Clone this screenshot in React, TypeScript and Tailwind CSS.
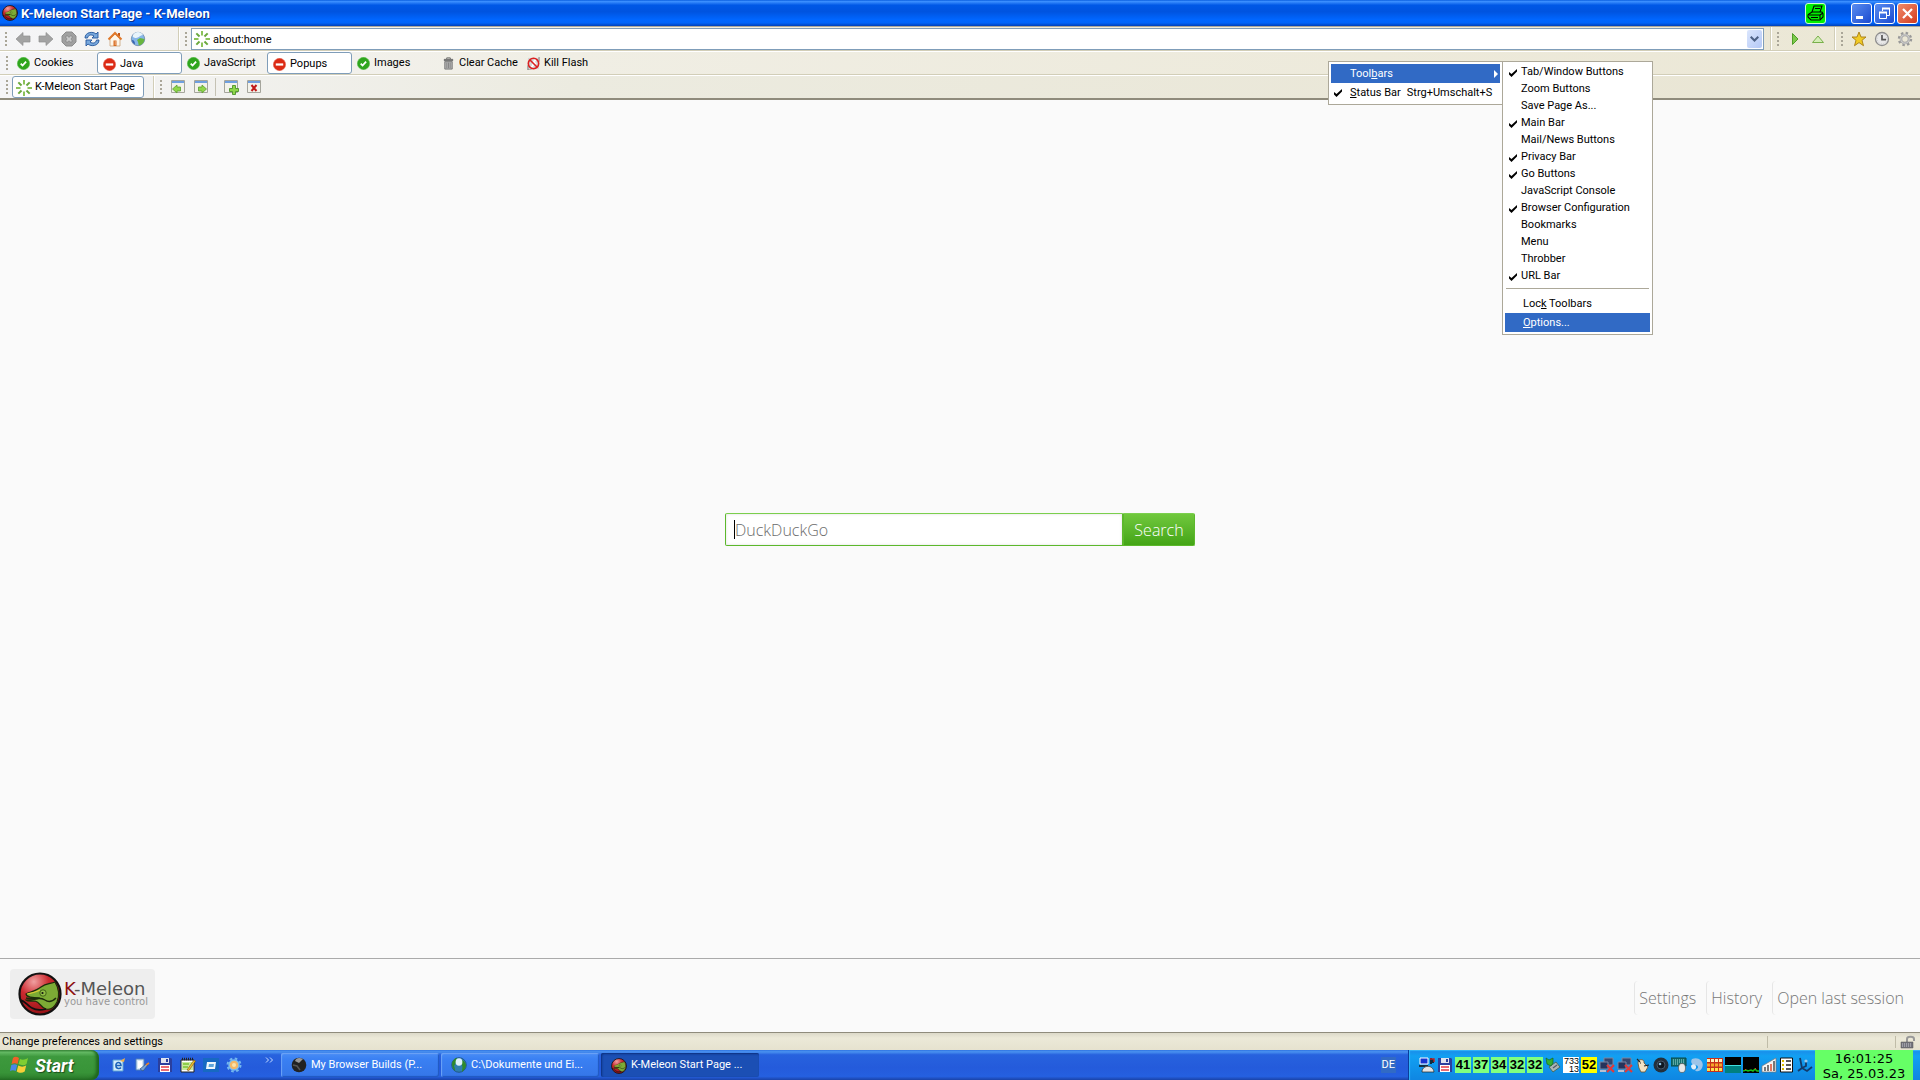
import type { ReactNode } from "react";
import clsx from "clsx";

type IconProps = { className?: string };

const Chameleon = ({ className }: IconProps) => (
  <svg viewBox="0 0 44 44" className={className} aria-hidden="true">
    <defs>
      <radialGradient id="km-red" cx="0.35" cy="0.2" r="0.9">
        <stop offset="0" stopColor="#f0a0a0" />
        <stop offset="0.4" stopColor="#cc2a30" />
        <stop offset="1" stopColor="#8c0c10" />
      </radialGradient>
    </defs>
    <circle cx="22" cy="22" r="20.5" fill="url(#km-red)" stroke="#111" strokeWidth="2.2" />
    <path
      d="M8 22C12 20 18 19 23 15C28 11 33 12 37 10C40 15 42 23 39 30C36 36 32 38 28 37C23 36 22 30 17 29C13 29 10 30 8 28C13 28 18 28 22 26C16 26 9 26 8 22Z"
      fill="#7cab35"
      stroke="#1d2c0b"
      strokeWidth="1.2"
    />
    <path d="M8 26C15 28 22 24 27 28C31 31 35 29 38 26" fill="none" stroke="#1d2c0b" strokeWidth="1.4" />
    <path d="M9 22C14 21 18 20 22 18" fill="none" stroke="#d6c934" strokeWidth="1.2" />
    <circle cx="25" cy="21" r="3.2" fill="#91bd45" stroke="#31500f" strokeWidth="0.8" />
    <circle cx="24.5" cy="21" r="1.1" fill="#111" />
    <path d="M2 28C8 29 9 34 14 36C19 39 24 38 28 37" fill="none" stroke="#111" strokeWidth="1.8" />
  </svg>
);

const Throbber = () => (
  <svg viewBox="0 0 16 16" className="size-4 shrink-0" aria-hidden="true">
    {[0, 45, 90, 135, 180, 225, 270, 315].map((a) => (
      <path
        key={a}
        d="M8 0V4.5"
        stroke={a % 90 ? "#6aa83c" : "#8cc25a"}
        strokeWidth="2"
        transform={`rotate(${a} 8 8)`}
      />
    ))}
  </svg>
);

const Arrow = ({ flip }: { flip?: boolean }) => (
  <svg viewBox="0 0 16 16" className={clsx("size-4", flip && "-scale-x-100")} aria-hidden="true">
    <path d="M1 8L8 1.5V5H15V11H8V14.5Z" fill="#a3a3a3" stroke="#919191" strokeWidth="0.7" />
  </svg>
);

const Stop = () => (
  <svg viewBox="0 0 16 16" className="size-4" aria-hidden="true">
    <path d="M5 1H11L15 5V11L11 15H5L1 11V5Z" fill="#a0a0a0" stroke="#8c8c8c" />
    <path d="M5 5H7L8 6.5L9 5H11V7L9.8 8L11 9V11H9L8 9.7L7 11H5V9L6.2 8L5 7Z" fill="#c9c9c9" stroke="#777" strokeWidth="0.5" />
  </svg>
);

const Reload = () => (
  <svg viewBox="0 0 16 16" className="size-4" aria-hidden="true">
    <path d="M1 7C1 1 9 0 12 3L14 1V7H8L10 5C7 3 4 4 3.5 7Z" fill="#77a7dc" stroke="#24569b" strokeWidth="0.9" />
    <path d="M15 9C15 15 7 16 4 13L2 15V9H8L6 11C9 13 12 12 12.5 9Z" fill="#77a7dc" stroke="#24569b" strokeWidth="0.9" />
  </svg>
);

const Home = () => (
  <svg viewBox="0 0 16 16" className="size-4" aria-hidden="true">
    <path d="M3 8V15H13V8L8 3Z" fill="#fdf6ea" stroke="#c9a27a" strokeWidth="0.8" />
    <path d="M11 2H13V5H11Z" fill="#c0561a" />
    <path d="M1.5 8.5L8 2L14.5 8.5" fill="none" stroke="#e0782a" strokeWidth="2" />
    <path d="M6.5 9.5H9.5V15H6.5Z" fill="#d86a20" />
    <path d="M7.6 11H9M7.6 13H9" stroke="#fde3c8" strokeWidth="0.8" />
  </svg>
);

const Globe = () => (
  <svg viewBox="0 0 16 16" className="size-4" aria-hidden="true">
    <circle cx="8" cy="8" r="6.7" fill="#86b6e8" stroke="#6d87a5" strokeWidth="0.8" />
    <path d="M3 4C5 0 11 0 13 4C10 4 9 7 6 7C4 7 2 6 3 4Z" fill="#e8f4fb" />
    <path d="M7 9L10 7L14.5 8C14 12 12 14 9 14.5C8 13 9 12 7 9Z" fill="#68b540" />
    <path d="M2 9C4 9 5 11 5 13.5C3 12 2 11 2 9Z" fill="#3562b0" />
  </svg>
);

const World = () => (
  <svg viewBox="0 0 16 16" className="size-4" aria-hidden="true">
    <circle cx="8" cy="8" r="7.3" fill="#2f7fae" stroke="#1d5276" strokeWidth="0.8" />
    <path d="M1 6C2 3 4 1 6 1C5 4 5 7 3 9C4 11 4 13 4 14C2 12 1 9 1 6Z" fill="#2f8a2c" />
    <path d="M11 3C14 4 15 7 15 9C14 12 12 14 11 15C11 12 12 10 11 8Z" fill="#2f8a2c" />
    <ellipse cx="8" cy="5" rx="3.4" ry="3.8" fill="#dcf1fa" />
  </svg>
);

const Allowed = () => (
  <svg viewBox="0 0 14 14" className="size-[13px] shrink-0" aria-hidden="true">
    <circle cx="7" cy="7" r="6.6" fill="#2fa51d" stroke="#54bd45" strokeWidth="0.6" />
    <path d="M4 7.2L6 9.2L9.8 5" fill="none" stroke="#fff" strokeWidth="1.9" />
  </svg>
);

const Blocked = () => (
  <svg viewBox="0 0 14 14" className="size-[13px] shrink-0" aria-hidden="true">
    <circle cx="7" cy="7" r="6.6" fill="#dc2a14" stroke="#e35a48" strokeWidth="0.6" />
    <path d="M3 7H11" stroke="#fff" strokeWidth="2.4" />
  </svg>
);

const Trash = () => (
  <svg viewBox="0 0 14 14" className="size-[13px] shrink-0" aria-hidden="true">
    <path d="M5 2V1H9V2" fill="none" stroke="#555" />
    <path d="M2 2H12V4.5H2Z" fill="#777" />
    <path d="M3 5H11V13H3Z" fill="#b5b5b5" stroke="#777" />
    <path d="M5.2 6V12M7 6V12M8.8 6V12" stroke="#777" strokeWidth="0.8" />
  </svg>
);

const KillFlash = () => (
  <svg viewBox="0 0 14 14" className="size-[13px] shrink-0" aria-hidden="true">
    <path d="M1 1H13V13H1Z" fill="#d5d5d5" />
    <path d="M10 3C6 3 8 11 4 11M6 7H10" fill="none" stroke="#fff" strokeWidth="2" />
    <path d="M13 0V5M1 9V14H5" fill="none" stroke="#777" />
    <circle cx="7" cy="7" r="5.6" fill="none" stroke="#dc2020" strokeWidth="1.7" />
    <path d="M3 3L11 11" stroke="#dc2020" strokeWidth="1.7" />
  </svg>
);

const TabIcon = ({ kind }: { kind: "left" | "right" | "new" | "close" }) => (
  <svg viewBox="0 0 16 16" className="size-4" aria-hidden="true">
    <path d="M1.5 1.5H14.5V13.5H1.5Z" fill="#f3f2ea" stroke="#a5a59c" />
    <path d="M2 2H14V4H2Z" fill="#6f9fe0" />
    {kind === "left" && <path d="M2.5 10L7 6V8H10.5V12H7V14Z" fill="#8fd64a" stroke="#5a9f30" strokeWidth="0.8" />}
    {kind === "right" && <path d="M13.5 10L9 6V8H5.5V12H9V14Z" fill="#8fd64a" stroke="#5a9f30" strokeWidth="0.8" />}
    {kind === "new" && (
      <path d="M9.5 6.5H12.5V9.5H15.5V12.5H12.5V15.5H9.5V12.5H6.5V9.5H9.5Z" fill="#8fd64a" stroke="#3f8a1c" strokeWidth="0.8" />
    )}
    {kind === "close" && <path d="M5.5 6L10.5 12M10.5 6L5.5 12" stroke="#c01818" strokeWidth="2" />}
  </svg>
);

const GoIcon = ({ up }: { up?: boolean }) => (
  <svg viewBox="0 0 16 16" className="size-4" aria-hidden="true">
    {up ? (
      <path d="M2.5 11.5L8 5L13.5 11.5Z" fill="#d4edb6" stroke="#79b04b" />
    ) : (
      <path d="M5.5 2.5L11 8L5.5 13.5Z" fill="#7cc94b" stroke="#4f9e28" />
    )}
  </svg>
);

const Star = () => (
  <svg viewBox="0 0 16 16" className="size-4" aria-hidden="true">
    <path d="M8 1L10 6H15L11 9.3L12.5 14.7L8 11.6L3.5 14.7L5 9.3L1 6H6Z" fill="#f1cb25" stroke="#a67c12" strokeWidth="0.9" />
  </svg>
);

const Clock = () => (
  <svg viewBox="0 0 16 16" className="size-4" aria-hidden="true">
    <circle cx="8" cy="8" r="6.5" fill="#e8e8e8" stroke="#8d8d8d" strokeWidth="1.3" />
    <circle cx="8" cy="8" r="4.8" fill="none" stroke="#bbb" strokeWidth="0.7" strokeDasharray="1 1.5" />
    <path d="M8 4V8.7H12" fill="none" stroke="#555" strokeWidth="1.7" />
  </svg>
);

const Gear = () => (
  <svg viewBox="0 0 16 16" className="size-4" aria-hidden="true">
    <circle cx="8" cy="8" r="6" fill="none" stroke="#999" strokeWidth="2.4" strokeDasharray="2.4 2.3" />
    <circle cx="8" cy="8" r="4" fill="none" stroke="#a5a5a5" strokeWidth="2.6" />
    <circle cx="8" cy="8" r="4.2" fill="none" stroke="#d5d5d5" strokeWidth="1" />
  </svg>
);

const Floppy = () => (
  <svg viewBox="0 0 16 16" className="size-4" aria-hidden="true">
    <path d="M1 1H14L15 2V15H1Z" fill="#2a3f9e" />
    <path d="M4 1H12V6H4Z" fill="#dfe4ee" />
    <path d="M9 2H11V5H9Z" fill="#2a3f9e" />
    <path d="M3 8H13V15H3Z" fill="#fff" />
    <path d="M4 10H12M4 13H12" stroke="#e33b44" strokeWidth="1.4" />
  </svg>
);

const Grip = () => (
  <span className="flex w-[11px] shrink-0 flex-col items-center gap-0.5 self-center">
    {[0, 1, 2, 3].map((i) => (
      <i key={i} className="size-0.5 bg-[#aaa698]" />
    ))}
  </span>
);

const ToolButton = ({ label, children }: { label: string; children: ReactNode }) => (
  <button type="button" aria-label={label} className="flex h-full w-[23px] shrink-0 items-center justify-center">
    {children}
  </button>
);

const ToggleButton = ({ label, icon, pressed }: { label: string; icon: ReactNode; pressed?: boolean }) => (
  <button
    type="button"
    aria-pressed={pressed}
    className={clsx(
      "flex h-[22px] w-[85px] shrink-0 items-center gap-1 rounded-[3px] border text-left whitespace-nowrap",
      pressed ? "border-[#7f9db9] bg-white pt-0.5 pl-[5px]" : "border-transparent pl-1",
    )}
  >
    {icon}
    {label}
  </button>
);

const Check = ({ on }: { on?: boolean }) => (
  <svg viewBox="0 0 8 8" className="size-2 shrink-0" aria-hidden="true">
    {on && <path d="M0 3V5.5L2.5 8L8 2.5V0L2.5 5Z" fill="#000" />}
  </svg>
);

const toolbars = [
  { name: "Tab/Window Buttons", on: true },
  { name: "Zoom Buttons", on: false },
  { name: "Save Page As...", on: false },
  { name: "Main Bar", on: true },
  { name: "Mail/News Buttons", on: false },
  { name: "Privacy Bar", on: true },
  { name: "Go Buttons", on: true },
  { name: "JavaScript Console", on: false },
  { name: "Browser Configuration", on: true },
  { name: "Bookmarks", on: false },
  { name: "Menu", on: false },
  { name: "Throbber", on: false },
  { name: "URL Bar", on: true },
];

const menuRow = "flex h-[19px] w-full items-center pt-px whitespace-nowrap";

const ContextMenu = () => (
  <>
    <div
      role="menu"
      className="absolute top-[61px] left-[1328px] z-10 w-[175px] border border-[#aca899] bg-white p-0.5 text-[11px]"
    >
      <button type="button" role="menuitem" className={clsx(menuRow, "bg-[#316ac5] pr-0.5 pl-[19px] text-white")}>
        <span>
          Tool<u>b</u>ars
        </span>
        <svg viewBox="0 0 4 8" className="ml-auto h-2 w-1" aria-hidden="true">
          <path d="M0 0L4 4L0 8Z" fill="#fff" />
        </svg>
      </button>
      <button type="button" role="menuitemcheckbox" aria-checked="true" className={clsx(menuRow, "pl-[3px]")}>
        <Check on />
        <span className="pl-2">
          <u>S</u>tatus Bar
        </span>
        <span className="pl-1.5">Strg+Umschalt+S</span>
      </button>
    </div>
    <div
      role="menu"
      className="absolute top-[61px] left-[1502px] z-20 w-[151px] border border-[#aca899] bg-white p-0.5 text-[11px]"
    >
      {toolbars.map((t) => (
        <button
          key={t.name}
          type="button"
          role="menuitemcheckbox"
          aria-checked={t.on}
          className="flex h-[17px] w-full items-center gap-1 pl-1 whitespace-nowrap"
        >
          <Check on={t.on} />
          {t.name}
        </button>
      ))}
      <hr className="mx-px mt-[3px] mb-[5px] border-[#aca899]" />
      <button type="button" role="menuitem" className={clsx(menuRow, "pl-[18px]")}>
        <span>
          Loc<u>k</u> Toolbars
        </span>
      </button>
      <button type="button" role="menuitem" className={clsx(menuRow, "bg-[#316ac5] pl-[18px] text-white")}>
        <span>
          <u>O</u>ptions...
        </span>
      </button>
    </div>
  </>
);

const captionButton =
  "flex size-[21px] items-center justify-center rounded-[3px] border border-white bg-linear-to-br from-[#5a8cf0] to-[#1c49d0]";

const TitleBar = () => (
  <header className="flex h-[26px] shrink-0 items-center bg-[linear-gradient(to_bottom,#0a5fe0_0%,#3c90ff_6%,#0058e6_20%,#0054e0_45%,#0066ff_75%,#0064fa_88%,#0040b8_100%)] pr-0.5 pl-0.5">
    <Chameleon className="size-4" />
    <h1 className="pt-px pl-[3px] text-[13px] font-bold whitespace-nowrap text-white [text-shadow:1px_1px_0_#0a2f8a]">
      K-Meleon Start Page - K-Meleon
    </h1>
    <button
      type="button"
      aria-label="Print"
      className="mr-[25px] ml-auto flex size-[21px] items-center justify-center rounded-[3px] border border-[#c8ffd0] bg-[#00f000]"
    >
      <svg viewBox="0 0 18 18" className="size-[18px]" fill="none" stroke="#000" strokeWidth="1.1" aria-hidden="true">
        <path d="M5 8L7 2H15L13 8M8 4.5H13" />
        <path d="M2 10L5 8H15L16 10V13L13 16H4L1 13V11Z" />
        <path d="M2 11H13V15M4 13.5H11M13 11L16 9" />
      </svg>
    </button>
    <div className="flex gap-0.5">
      <button type="button" aria-label="Minimize" className={captionButton}>
        <svg viewBox="0 0 15 15" className="size-[15px]" aria-hidden="true">
          <path d="M2 10H9V13H2Z" fill="#fff" />
        </svg>
      </button>
      <button type="button" aria-label="Restore" className={captionButton}>
        <svg viewBox="0 0 15 15" className="size-[15px]" fill="none" stroke="#fff" aria-hidden="true">
          <path d="M5.5 5V2.5H12.5V9.5H10" />
          <path d="M5 2.5H13" strokeWidth="2" />
          <path d="M2.5 6.5H9.5V12.5H2.5Z" />
          <path d="M2 6.5H10" strokeWidth="2" />
        </svg>
      </button>
      <button
        type="button"
        aria-label="Close"
        className="flex size-[21px] items-center justify-center rounded-[3px] border border-white bg-linear-to-br from-[#f08a6a] to-[#d2381a]"
      >
        <svg viewBox="0 0 15 15" className="size-[15px]" aria-hidden="true">
          <path d="M3 3L12 12M12 3L3 12" stroke="#fff" strokeWidth="2.2" />
        </svg>
      </button>
    </div>
  </header>
);

const band = "flex items-center border-r border-[#d2ceb8]";
const row = "flex h-6 bg-linear-to-r from-[#f5f5f7] via-[#f0eee4] via-30% to-[#ebe7d5] text-[11px]";

const Toolbars = () => (
  <div className="shrink-0 border-t border-[#aca899]">
    <div className={clsx(row, "border-b border-[#d2ceb8]")}>
      <div className={clsx(band, "w-[179px] shrink-0")}>
        <Grip />
        <ToolButton label="Back">
          <Arrow />
        </ToolButton>
        <ToolButton label="Forward">
          <Arrow flip />
        </ToolButton>
        <ToolButton label="Stop">
          <Stop />
        </ToolButton>
        <ToolButton label="Reload">
          <Reload />
        </ToolButton>
        <ToolButton label="Home">
          <Home />
        </ToolButton>
        <ToolButton label="Go to web">
          <Globe />
        </ToolButton>
      </div>
      <div className={clsx(band, "min-w-0 grow border-l border-l-white pr-1.5")}>
        <Grip />
        <div className="flex h-[22px] min-w-0 grow items-center border border-[#7f9db9] bg-white pr-px pl-0.5">
          <Throbber />
          <input
            aria-label="Address"
            defaultValue="about:home"
            className="h-full min-w-0 grow bg-transparent pt-px pl-[3px] text-black outline-none"
          />
          <button
            type="button"
            aria-label="Show history"
            className="flex h-[18px] w-[15px] items-center justify-center rounded-[2px] bg-linear-to-br from-[#dbe6fd] to-[#b4c8f6]"
          >
            <svg viewBox="0 0 9 6" className="h-1.5 w-[9px]" aria-hidden="true">
              <path d="M0.7 0.7L4.5 4.5L8.3 0.7" fill="none" stroke="#4d6185" strokeWidth="2" />
            </svg>
          </button>
        </div>
      </div>
      <div className={clsx(band, "w-16 shrink-0 border-l border-l-white")}>
        <Grip />
        <ToolButton label="Go">
          <GoIcon />
        </ToolButton>
        <ToolButton label="Go up">
          <GoIcon up />
        </ToolButton>
      </div>
      <div className="flex w-[85px] shrink-0 items-center border-l border-white">
        <Grip />
        <ToolButton label="Bookmarks">
          <Star />
        </ToolButton>
        <ToolButton label="History">
          <Clock />
        </ToolButton>
        <ToolButton label="Preferences">
          <Gear />
        </ToolButton>
      </div>
    </div>
    <div className={clsx(row, "items-center border-t border-b border-t-white border-b-[#d2ceb8] pl-px")}>
      <Grip />
      <ToggleButton label="Cookies" icon={<Allowed />} />
      <ToggleButton label="Java" icon={<Blocked />} pressed />
      <ToggleButton label="JavaScript" icon={<Allowed />} />
      <ToggleButton label="Popups" icon={<Blocked />} pressed />
      <ToggleButton label="Images" icon={<Allowed />} />
      <ToggleButton label="Clear Cache" icon={<Trash />} />
      <ToggleButton label="Kill Flash" icon={<KillFlash />} />
    </div>
    <div className="flex h-[25px] items-center border-t border-b-2 border-t-white border-b-[#8f8b7c] bg-linear-to-r from-[#f5f5f7] via-[#ecebe0] via-30% to-[#e9e5d3] pl-px text-[11px]">
      <Grip />
      <button
        type="button"
        className="flex h-[22px] w-[132px] shrink-0 items-center gap-[3px] rounded-[3px] border border-[#7f9db9] bg-white pt-px pl-[3px] whitespace-nowrap"
      >
        <Throbber />
        K-Meleon Start Page
      </button>
      <span className="ml-[9px] h-full w-0.5 border-l border-[#d2ceb8] bg-white" />
      <Grip />
      <ToolButton label="Previous tab">
        <TabIcon kind="left" />
      </ToolButton>
      <ToolButton label="Next tab">
        <TabIcon kind="right" />
      </ToolButton>
      <span className="mx-[3px] h-[18px] w-px bg-[#c5c2b4]" />
      <ToolButton label="New tab">
        <TabIcon kind="new" />
      </ToolButton>
      <ToolButton label="Close tab">
        <TabIcon kind="close" />
      </ToolButton>
    </div>
  </div>
);

const StartPage = () => (
  <main className="flex min-h-0 grow flex-col bg-[#fafafa] font-['Open_Sans',sans-serif]">
    <div className="flex grow items-center justify-center">
      <form className="flex h-[33px] w-[470px]" onSubmit={(e) => e.preventDefault()}>
        <div className="flex min-w-0 grow items-center rounded-l-[2px] border border-[#5cb82c] border-t-[#7bcf4d] bg-white pl-2 shadow-[inset_0_0_3px_#ddd]">
          <span className="h-[19px] w-px bg-black" />
          <input
            aria-label="Search the web"
            placeholder="DuckDuckGo"
            className="min-w-0 grow bg-transparent pt-px text-base font-light outline-none placeholder:text-[#6c6c6c]"
          />
        </div>
        <button
          type="submit"
          className="w-[72px] rounded-r-[2px] border border-[#5cb82c] border-t-[#7bcf4d] bg-linear-to-b from-[#70c83c] to-[#44a516] pt-px text-base font-light text-white"
        >
          Search
        </button>
      </form>
    </div>
    <footer className="flex h-[74px] shrink-0 items-start border-t border-[#aaa] pt-2.5 pr-4 pl-2.5">
      <div className="flex h-[50px] w-[145px] items-center gap-0.5 rounded bg-[#eee] pl-2">
        <Chameleon className="size-11 shrink-0" />
        <div className="font-['DejaVu_Sans']">
          <p className="text-[18px] leading-4 text-[#555]">
            <span className="text-[#8c1010]">K</span>-Meleon
          </p>
          <p className="text-[10px] leading-[10px] whitespace-nowrap text-[#999]">you have control</p>
        </div>
      </div>
      <nav className="mt-3 ml-auto flex gap-2.5 text-base font-light text-[#777]">
        {["Settings", "History", "Open last session"].map((l) => (
          <a key={l} href="#" className="rounded-[4px] border-l border-[#e6e6e6] py-[5px] pl-1">
            {l}
          </a>
        ))}
      </nav>
    </footer>
  </main>
);

const StatusBar = () => (
  <div className="flex h-[18px] shrink-0 items-center border-t border-[#8f8b7c] bg-linear-to-b from-[#dcd9c9] via-[#ece9d8] via-30% to-[#e6e2cf] pl-0.5 text-[11px]">
    <p className="grow pt-px">Change preferences and settings</p>
    <span className="h-3 w-[129px] border-r border-l border-[#c0bca8]" />
    <span className="flex w-6 justify-center">
      <svg viewBox="0 0 16 14" className="h-3.5 w-4" aria-hidden="true">
        <path d="M7 7V4C7 1 14 1 14 4V6" fill="none" stroke="#999" strokeWidth="2" />
        <path d="M1 7H13V13H1Z" fill="#74747c" stroke="#555" strokeWidth="0.5" />
        <path d="M2 9H12M2 11H12" stroke="#c9c9d0" strokeDasharray="1 1" />
      </svg>
    </span>
  </div>
);

const OutlookArt = () => (
  <>
    <path d="M2 3H12V14H2Z" fill="#d5edfb" stroke="#5aa0d4" />
    <path d="M5 8.5H10C10 4 4 5 5 9C5 12 9 12 10 10.5" fill="none" stroke="#1a62b8" strokeWidth="1.6" />
    <path d="M9 4L14 1L13 5Z" fill="#f3b04a" />
  </>
);

const DesktopArt = () => (
  <>
    <path d="M2 2H10V13H2Z" fill="#d9e9f7" stroke="#4e7fb9" />
    <path d="M4 4H8V11H4Z" fill="#fff" />
    <path d="M6 12L12 7L14 8L9 14Z" fill="#7aa4d2" stroke="#294f85" strokeWidth="0.7" />
    <path d="M12 8L15 6" stroke="#e8812a" strokeWidth="1.6" />
  </>
);

const NotesArt = () => (
  <>
    <path d="M1 3H14V15H1Z" fill="#fff" stroke="#222" />
    <path d="M2 2H14" stroke="#222" strokeWidth="2.4" strokeDasharray="1 1" />
    <path d="M2 5H13V13H2Z" fill="#c9ea9a" />
    <path d="M3 7H9M3 10H8" stroke="#7cc435" strokeWidth="1.4" />
    <path d="M7 13L14 3L15.5 4L9 13.5Z" fill="#f0c330" stroke="#7d4d11" strokeWidth="0.6" />
  </>
);

const RemoteArt = () => (
  <>
    <path d="M0 1H16V15H0Z" fill="#1769c2" />
    <path d="M4 5H13L12 12H3Z" fill="#eef7fc" />
    <path d="M6 7H11L10.5 10H5.5Z" fill="#5fa6da" />
  </>
);

const WeatherArt = () => (
  <>
    <circle cx="8" cy="8" r="6.5" fill="none" stroke="#73b6ee" strokeWidth="2" strokeDasharray="2.6 2.5" />
    <circle cx="8" cy="8" r="5" fill="#f5b868" stroke="#78bdf2" strokeWidth="1.4" />
    <circle cx="8" cy="8" r="2" fill="#fbe3a8" />
  </>
);

const quickLaunch = [
  { label: "Outlook Express", icon: <OutlookArt /> },
  { label: "Show Desktop", icon: <DesktopArt /> },
  { label: "Save", icon: <Floppy /> },
  { label: "Notes", icon: <NotesArt /> },
  { label: "Remote", icon: <RemoteArt /> },
  { label: "Weather", icon: <WeatherArt /> },
];

const TaskButton = ({ label, icon, active }: { label: string; icon: ReactNode; active?: boolean }) => (
  <button
    type="button"
    className={clsx(
      "flex h-6 w-[158px] items-center gap-1 rounded-[2px] pl-2.5 text-[11px] whitespace-nowrap text-white",
      active
        ? "bg-[#1b4fb4] pt-px shadow-[inset_1px_1px_2px_#0c2f7d]"
        : "bg-linear-to-b from-[#4a8ef5] via-[#3a80f3] via-25% to-[#3576e8] shadow-[inset_1px_1px_1px_#6da4f7,inset_-1px_-1px_1px_#2058c0]",
    )}
  >
    {icon}
    {label}
  </button>
);

const Meter = ({ value, alert }: { value: string; alert?: boolean }) => (
  <span
    className={clsx(
      "flex size-4 items-center justify-center font-['Liberation_Sans'] text-[13px] font-bold text-black",
      alert ? "bg-[#ffff00]" : "bg-[#80ff80]",
    )}
  >
    {value}
  </span>
);

const TrayIcon = ({ children }: { children: ReactNode }) => (
  <svg viewBox="0 0 16 16" className="size-4" aria-hidden="true">
    {children}
  </svg>
);

const NetworkDown = () => (
  <TrayIcon>
    <path d="M5 1H14V8H5Z" fill="#34466e" stroke="#7a86a3" />
    <path d="M1 5H9V12H1Z" fill="#25345c" stroke="#7a86a3" />
    <path d="M1 14H7" stroke="#b9bfd0" strokeWidth="2" />
    <path d="M8 8L15 15M15 8L8 15" stroke="#e03a3a" strokeWidth="2.2" />
  </TrayIcon>
);

const Tray = () => (
  <div className="flex h-full items-center gap-0.5 border-l border-[#0a3d9c] bg-linear-to-b from-[#1a8be8] via-[#12a0f2] via-20% to-[#0f86e2] pl-2.5 shadow-[inset_1px_1px_1px_#35b5f8]">
    <TrayIcon>
      <path d="M1 1H9V7H1Z" fill="#1535d0" stroke="#fff" />
      <path d="M0 9H9M12 1V7M14 2V6" stroke="#111" strokeWidth="1.6" />
      <path d="M11 2H15V5" fill="none" stroke="#c02020" strokeWidth="1.4" />
      <path d="M3 15C3 8 14 7 15 15Z" fill="#e4e4e4" stroke="#222" strokeWidth="0.7" />
    </TrayIcon>
    <Floppy />
    <Meter value="41" />
    <Meter value="37" />
    <Meter value="34" />
    <Meter value="32" />
    <Meter value="32" />
    <TrayIcon>
      <path d="M4 10L11 5L15 10L8 15Z" fill="#a9b4b4" stroke="#465" strokeWidth="0.9" />
      <path d="M1 1L4 3L8 1V6L6 9L2 7Z" fill="#35ae35" stroke="#166b16" strokeWidth="0.7" />
      <path d="M8 11L12 8" stroke="#556" strokeWidth="1.2" />
    </TrayIcon>
    <span className="flex size-4 flex-col items-end justify-center bg-white font-['Liberation_Sans'] text-[9px] leading-2 text-black">
      <span>733</span>
      <span>13</span>
    </span>
    <Meter value="52" alert />
    <NetworkDown />
    <NetworkDown />
    <TrayIcon>
      <path d="M3 6C3 1 10 2 9 6L13 10L10 15H6L4 11Z" fill="#f3e3c3" stroke="#6b512e" strokeWidth="0.8" />
      <path d="M2 2L5 5M9 9L14 8M5 6H6" stroke="#222" strokeWidth="1.2" />
    </TrayIcon>
    <TrayIcon>
      <circle cx="8" cy="8" r="7.5" fill="#24303c" />
      <circle cx="8" cy="8" r="4" fill="#101820" stroke="#46586a" />
      <circle cx="7" cy="7" r="1.3" fill="#8fc1e3" />
    </TrayIcon>
    <TrayIcon>
      <path d="M0 1H15V9H0Z" fill="#157070" stroke="#0a4848" />
      <path d="M2 3H13M2 5H13M2 7H8" stroke="#a8e0dc" strokeDasharray="1 1" />
      <ellipse cx="11" cy="11" rx="3.5" ry="4.5" fill="#e8e8e8" stroke="#555" strokeWidth="0.7" />
    </TrayIcon>
    <TrayIcon>
      <path d="M3 2C10 -1 16 5 13 11C11 15 7 15 6 13C11 11 9 8 6 8C3 8 1 5 3 2Z" fill="#9dc4e8" />
      <path d="M2 9C3 6 8 7 7 11C5 14 2 12 2 9Z" fill="#e2eef8" />
    </TrayIcon>
    <TrayIcon>
      <path d="M0 1H16V15H0Z" fill="#c8301a" />
      <path d="M0 3.5H16" stroke="#fff0b8" strokeWidth="3" strokeDasharray="3 1" />
      <path d="M0 8H16" stroke="#f5a52a" strokeWidth="3" strokeDasharray="3 1" />
      <path d="M0 12.5H16" stroke="#ffe04a" strokeWidth="3" strokeDasharray="3 1" />
    </TrayIcon>
    <TrayIcon>
      <path d="M0 0H16V16H0Z" fill="#000" />
      <path d="M0 8H16V16H0Z" fill="#008080" />
      <path d="M0 8.5H16" stroke="#40e0e0" />
    </TrayIcon>
    <TrayIcon>
      <path d="M0 0H16V16H0Z" fill="#000" />
      <path d="M0 14L3 13L5 14L8 13L10 14L12 12L14 14H16" fill="none" stroke="#18c018" strokeWidth="1.5" />
      <path d="M2 12.5H3M12 11.5H13" stroke="#f02020" />
    </TrayIcon>
    <TrayIcon>
      <path d="M1 15V9L15 1V15Z" fill="#f5f5f5" stroke="#777" strokeWidth="0.7" />
      <path d="M4 14V10M7 14V8M13 14V4" stroke="#444" strokeWidth="1.4" />
      <path d="M10 14V7" stroke="#e04020" strokeWidth="1.4" />
    </TrayIcon>
    <TrayIcon>
      <path d="M1.5 1H13.5V15H1.5Z" fill="#fff" stroke="#111" />
      <path d="M3 4H5M3 8H5M3 12H5" stroke="#d8b800" strokeWidth="2" />
      <path d="M7 4H12M7 8H12M7 12H12" stroke="#222" strokeWidth="1.4" />
    </TrayIcon>
    <TrayIcon>
      <path d="M3 1L5 11L1 14M5 11L10 14L15 10M9 4V9L5 11" fill="none" stroke="#123a6a" strokeWidth="1.8" />
      <circle cx="9" cy="4" r="1.6" fill="#9cc8e8" />
    </TrayIcon>
    <time className="flex h-full w-[98px] flex-col items-center justify-center bg-[#66ff66] pt-0.5 font-['DejaVu_Sans'] text-[13px] leading-[15px] text-black">
      <span>16:01:25</span>
      <span>Sa, 25.03.23</span>
    </time>
    <span className="w-[5px]" />
  </div>
);

const TaskBar = () => (
  <div className="flex h-[30px] shrink-0 items-center bg-[linear-gradient(to_bottom,#2f74e2_0%,#4a92f0_6%,#2762de_16%,#245bdb_60%,#2560e0_88%,#1a43a8_100%)]">
    <button
      type="button"
      className="flex h-full w-[99px] shrink-0 items-center gap-1.5 rounded-r-[8px] bg-[linear-gradient(to_bottom,#3c8a3c_0%,#62b862_8%,#3d993d_22%,#389438_75%,#2a7a2a_100%)] pl-2.5 text-[18px] font-bold text-white italic shadow-[inset_-3px_-1px_3px_#1f661f] [text-shadow:1px_1px_1px_#1b4d1b]"
    >
      <svg viewBox="0 0 19 18" className="h-[18px] w-[19px]" aria-hidden="true">
        <path d="M3 2C5 0 7 1 9 2L7.5 8C5.5 7 4 7 1.5 8Z" fill="#f0602a" />
        <path d="M10 3C12 4 15 4 18 2L16.5 8C14 10 11 9 8.5 8Z" fill="#7fce32" />
        <path d="M1.3 9C4 8 5.5 8 7.2 9L5.7 15C4 14 2 14 0 15Z" fill="#4a86e8" />
        <path d="M8.2 9.5C11 11 13.5 11 16.2 9.5L14.7 15.5C12 17.5 9 17 6.700 15.5Z" fill="#f8cf38" />
      </svg>
      <span>Start</span>
    </button>
    <div className="flex pl-2">
      {quickLaunch.map((q) => (
        <ToolButton key={q.label} label={q.label}>
          <TrayIcon>{q.icon}</TrayIcon>
        </ToolButton>
      ))}
    </div>
    <button type="button" aria-label="More" className="mr-1.5 ml-5 flex h-5 w-2.5">
      <svg viewBox="0 0 9 6" className="mt-0.5 h-1.5 w-[9px]" aria-hidden="true">
        <path d="M1 0.5L3.5 3L1 5.5M5 0.5L7.5 3L5 5.5" fill="none" stroke="#c6dcff" />
      </svg>
    </button>
    <div className="flex gap-0.5">
      <TaskButton
        label="My Browser Builds (P..."
        icon={
          <TrayIcon>
            <circle cx="8" cy="8" r="7.3" fill="#222" />
            <path d="M4 4L8 6L12 2C8 0 5 1 4 4Z" fill="#999" />
            <path d="M2 8L6 9L9 13" fill="none" stroke="#555" strokeWidth="1.5" />
          </TrayIcon>
        }
      />
      <TaskButton label="C:\Dokumente und Ei..." icon={<World />} />
      <TaskButton label="K-Meleon Start Page ..." icon={<Chameleon className="size-4" />} active />
    </div>
    <div className="grow" />
    <span className="mr-3 bg-[#316ac5] px-px text-[11px] text-white">DE</span>
    <Tray />
  </div>
);

export default function App() {
  return (
    <div className="relative flex h-screen flex-col overflow-hidden font-[Roboto,sans-serif] text-black">
      <TitleBar />
      <Toolbars />
      <StartPage />
      <StatusBar />
      <TaskBar />
      <ContextMenu />
    </div>
  );
}
